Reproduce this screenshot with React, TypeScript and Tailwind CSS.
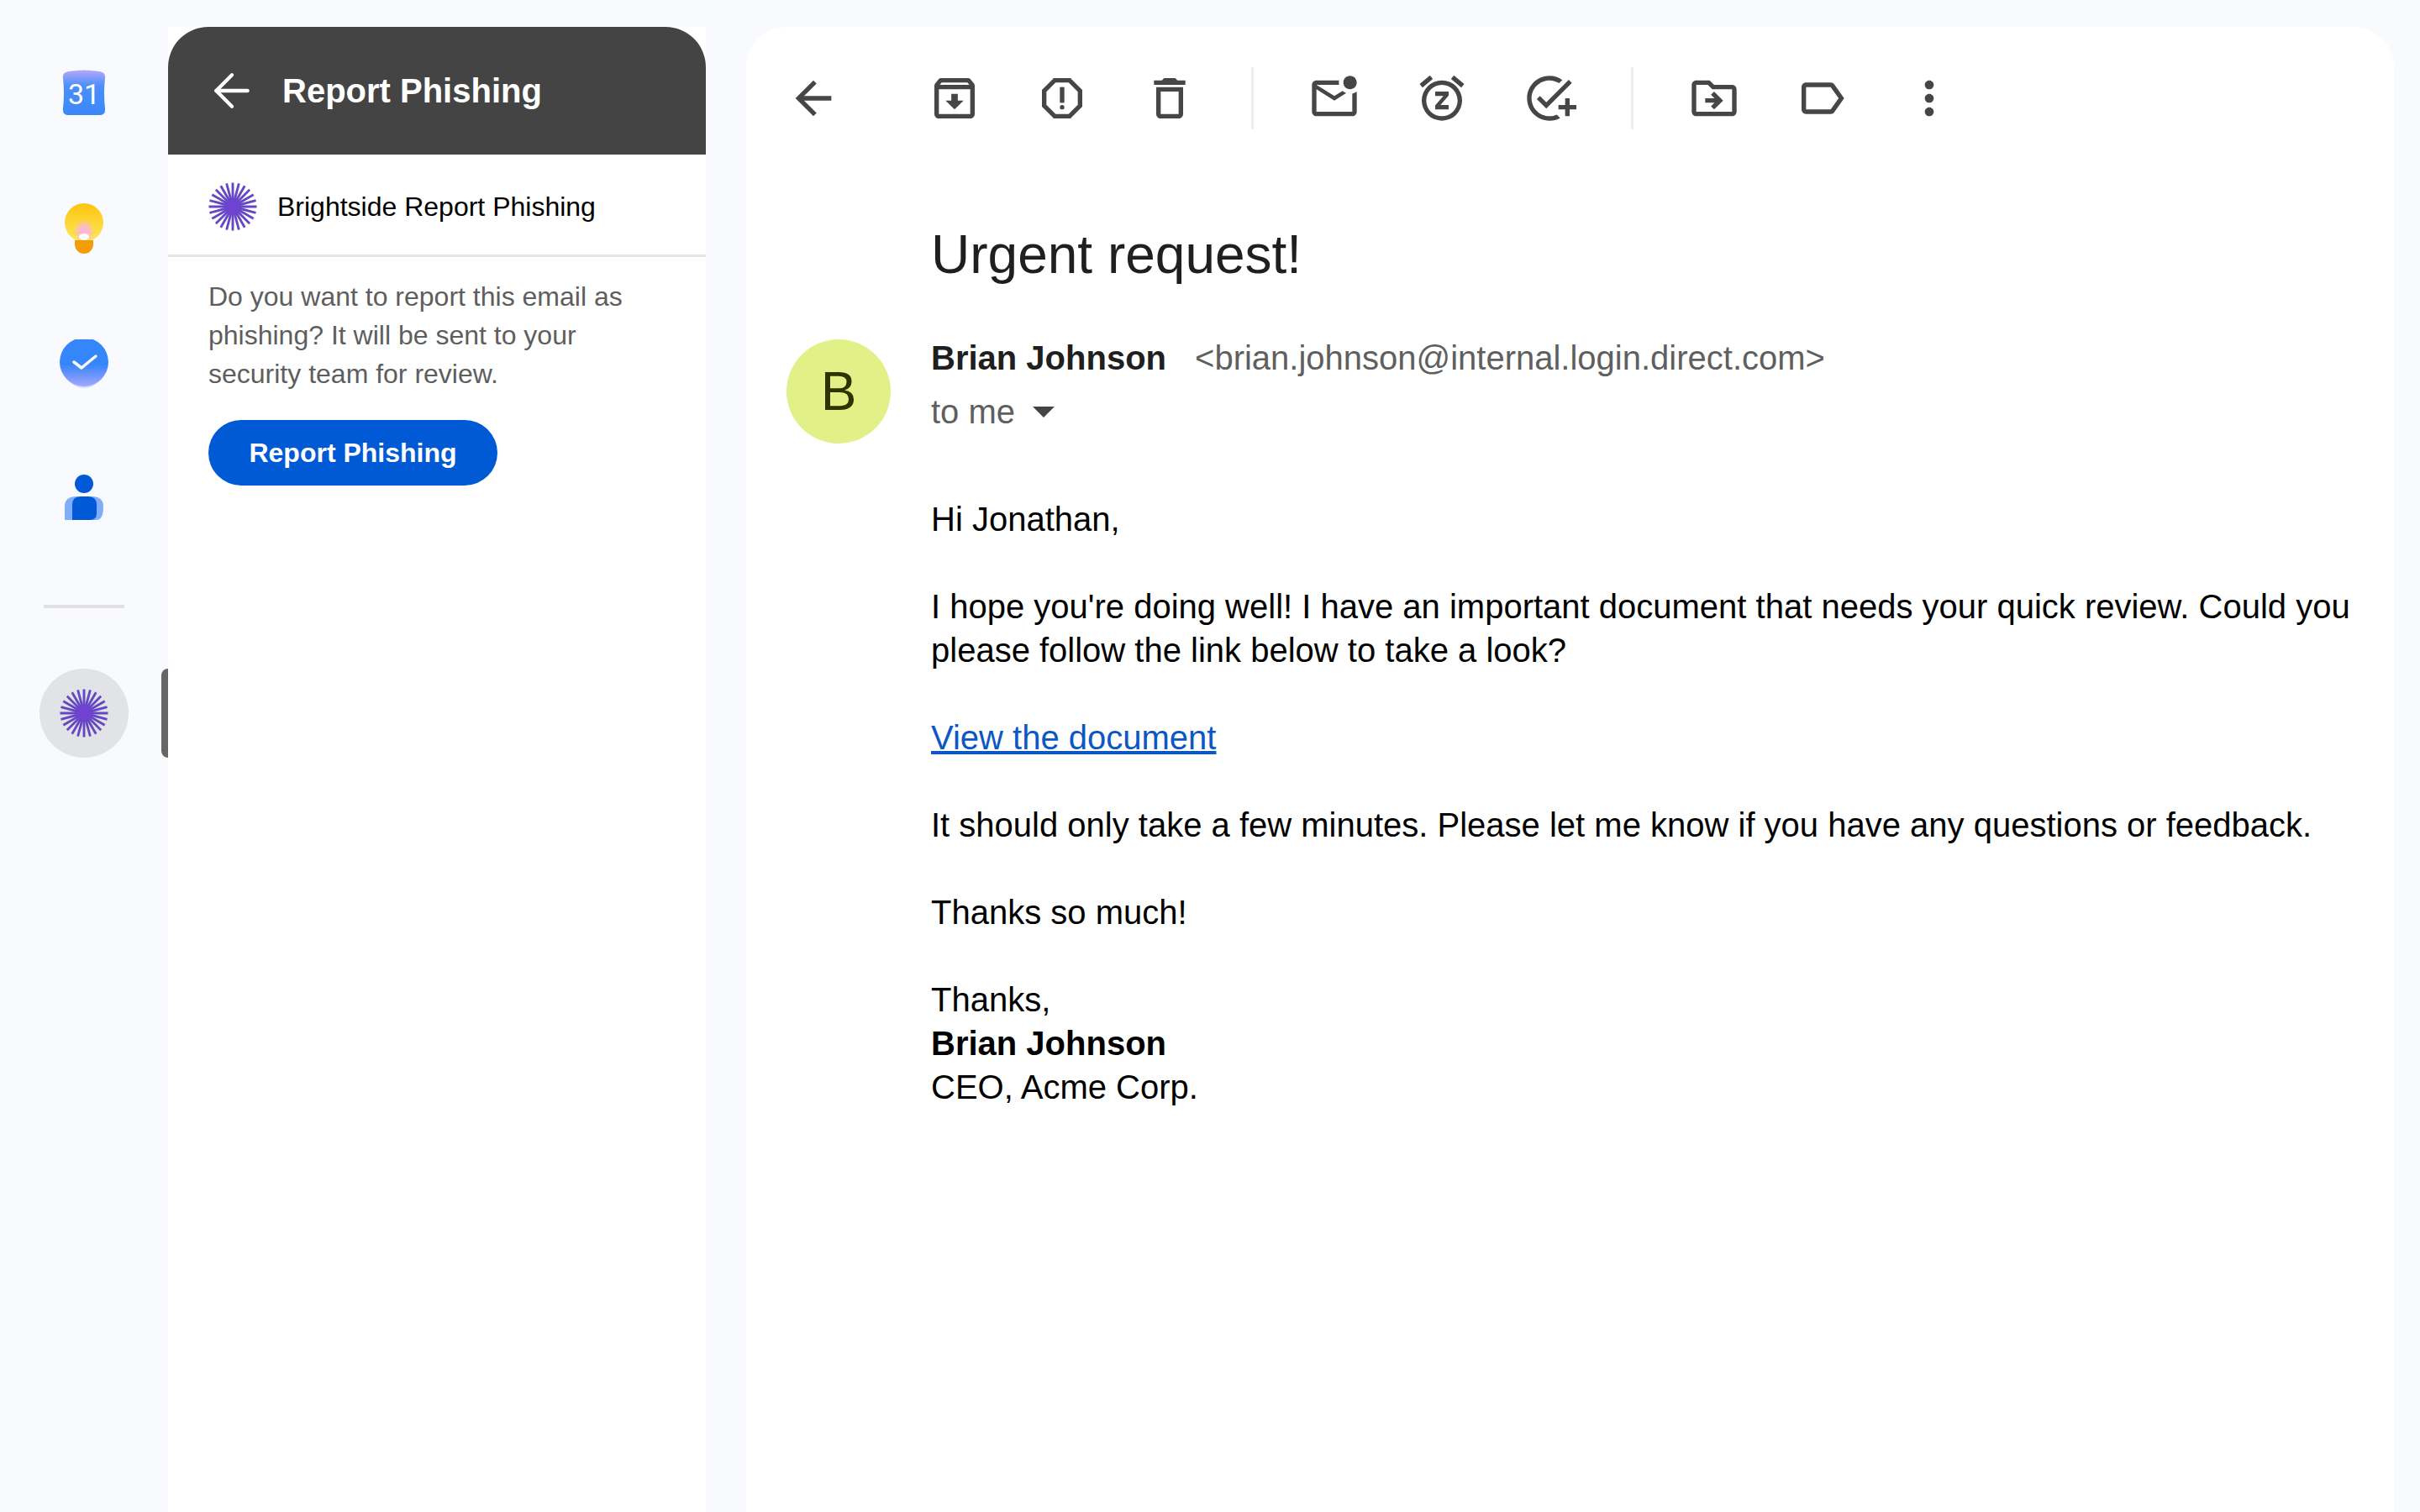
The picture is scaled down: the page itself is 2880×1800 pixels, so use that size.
import { ArrowLeft } from "lucide-react";
import {
  MdArrowBack,
  MdOutlineArchive,
  MdOutlineReport,
  MdOutlineDelete,
  MdOutlineMarkEmailUnread,
  MdOutlineSnooze,
  MdOutlineAddTask,
  MdOutlineDriveFileMove,
  MdOutlineLabel,
  MdMoreVert,
} from "react-icons/md";

function Burst({ size }: { size: number }) {
  const rays = Array.from({ length: 24 }, (_, i) => (i * 360) / 24);
  return (
    <svg width={size} height={size} viewBox="0 0 58 58">
      {rays.map((r) => (
        <polygon key={r} points="27.6,0.5 30.4,0.5 30.5,29 27.5,29" fill="#6547c4" transform={`rotate(${r} 29 29)`} />
      ))}
      <circle cx="29" cy="29" r="10" fill="#6f42cf" />
    </svg>
  );
}

function CalendarIcon() {
  return (
    <svg width="52" height="54" viewBox="0 0 52 54">
      <defs>
        <linearGradient id="cal" x1="0" y1="0" x2="0" y2="1">
          <stop offset="0" stopColor="#b5a8fb" />
          <stop offset="0.35" stopColor="#4b8ffa" />
          <stop offset="1" stopColor="#3b87f9" />
        </linearGradient>
      </defs>
      <path d="M8 2 Q26 -1 44 2 Q52 3 51 10 Q49 28 51 46 Q52 54 44 54 L8 54 Q0 54 1 46 Q3 28 1 10 Q0 3 8 2Z" fill="url(#cal)" />
      <text x="26" y="41" textAnchor="middle" fontSize="34" fill="#ffffff" fontFamily="Roboto, sans-serif">31</text>
    </svg>
  );
}

function BulbIcon() {
  return (
    <svg width="46" height="60" viewBox="0 0 46 60">
      <defs>
        <linearGradient id="bulb" x1="0" y1="0" x2="0" y2="1">
          <stop offset="0" stopColor="#fdc40f" />
          <stop offset="1" stopColor="#fde95a" />
        </linearGradient>
        <radialGradient id="glow" cx="0.5" cy="0.55" r="0.5">
          <stop offset="0.3" stopColor="#fbb6d8" />
          <stop offset="1" stopColor="#fbb6d8" stopOpacity="0" />
        </radialGradient>
      </defs>
      <circle cx="23" cy="23" r="23" fill="url(#bulb)" />
      <ellipse cx="23" cy="32" rx="13" ry="15" fill="url(#glow)" />
      <ellipse cx="23" cy="40" rx="6" ry="4" fill="#ffffff" />
      <path d="M12 44 H34 V49 A11 11 0 0 1 12 49 Z" fill="#f39c05" />
    </svg>
  );
}

function TasksIcon() {
  return (
    <svg width="58" height="58" viewBox="0 0 58 58">
      <defs>
        <linearGradient id="tsk" x1="0" y1="0" x2="0" y2="1">
          <stop offset="0.55" stopColor="#3585fb" />
          <stop offset="1" stopColor="#a7a6fd" />
        </linearGradient>
      </defs>
      <ellipse cx="29" cy="30" rx="26" ry="28" fill="#c6e3fb" />
      <circle cx="29" cy="27" r="29" fill="url(#tsk)" />
      <path d="M17 27 L26 34 L43 20" fill="none" stroke="#ffffff" strokeWidth="3.5" strokeLinecap="round" strokeLinejoin="round" />
    </svg>
  );
}

function ContactsIcon() {
  return (
    <svg width="46" height="54" viewBox="0 0 46 54">
      <circle cx="23" cy="11" r="11" fill="#0059d6" />
      <path d="M0 54 V38 Q0 26 14 26 H32 Q46 26 46 38 Q46 54 38 54 Z" fill="#80aefb" />
      <path d="M9 54 V36 Q9 26 19 26 H28 Q38 26 38 36 V46 Q38 54 30 54 Z" fill="#0059d6" />
    </svg>
  );
}

function ToolButton({ icon: Icon }: { icon: React.ComponentType<{ size?: number }> }) {
  return (
    <div className="flex h-16 w-16 items-center justify-center text-[#444746]">
      <Icon size={64} />
    </div>
  );
}

export default function App() {
  return (
    <div className="flex h-[1800px] w-[2880px] overflow-hidden bg-[#f8fafd] font-['Liberation_Sans',sans-serif] text-[#1f1f1f]">
      {/* icon rail */}
      <div className="relative flex w-[200px] shrink-0 flex-col items-center">
        <div className="mt-[83px]"><CalendarIcon /></div>
        <div className="mt-[105px]"><BulbIcon /></div>
        <div className="mt-[102px]"><TasksIcon /></div>
        <div className="mt-[103px]"><ContactsIcon /></div>
        <div className="mt-[101px] h-1 w-24 bg-[#e1e1e1]" />
        <div className="mt-[72px] flex h-[106px] w-[106px] items-center justify-center rounded-full bg-[#e1e3e6]">
          <Burst size={58} />
        </div>
        <div className="absolute left-[192px] top-[796px] h-[106px] w-2 rounded-l-lg bg-[#666666]" />
      </div>

      {/* add-on side panel */}
      <div className="mt-8 flex w-[640px] shrink-0 flex-col bg-white">
        <div className="flex h-[152px] items-center gap-[28px] rounded-t-[48px] bg-[#444444] pl-[44px] text-[40px] font-bold text-white">
          <ArrowLeft size={64} strokeWidth={1.6} />
          <span>Report Phishing</span>
        </div>
        <div className="flex h-[122px] items-center gap-6 border-b-[3px] border-[#e5e5e5] px-12 pt-1 text-[32px] text-black">
          <Burst size={58} />
          <span>Brightside Report Phishing</span>
        </div>
        <div className="px-12 pt-6">
          <p className="text-[32px] leading-[46px] text-[#5e5e5e]">
            Do you want to report this email as
            <br />
            phishing? It will be sent to your
            <br />
            security team for review.
          </p>
          <button className="mt-8 flex h-[78px] w-[344px] items-center justify-center rounded-full bg-[#005ad6] text-[32px] font-bold text-white">
            Report Phishing
          </button>
        </div>
      </div>

      {/* message */}
      <div className="ml-[48px] mr-[31px] mt-8 min-w-0 flex-1 rounded-t-[48px] bg-white pl-12">
        <div className="mt-12 flex items-center">
          <ToolButton icon={MdArrowBack} />
          <div className="ml-[104px] flex items-center gap-16">
            <ToolButton icon={MdOutlineArchive} />
            <ToolButton icon={MdOutlineReport} />
            <ToolButton icon={MdOutlineDelete} />
            <div className="ml-px h-[74px] w-[3px] bg-[#eeeeee]" />
            <ToolButton icon={MdOutlineMarkEmailUnread} />
            <ToolButton icon={MdOutlineSnooze} />
            <ToolButton icon={MdOutlineAddTask} />
            <div className="ml-px h-[74px] w-[3px] bg-[#eeeeee]" />
            <ToolButton icon={MdOutlineDriveFileMove} />
            <ToolButton icon={MdOutlineLabel} />
            <ToolButton icon={MdMoreVert} />
          </div>
        </div>

        <h1 className="ml-[172px] mt-[113px] text-[64px] leading-[72px]">Urgent request!</h1>

        <div className="mt-[65px] flex items-start gap-12">
          <div className="flex h-[124px] w-[124px] shrink-0 items-center justify-center rounded-full bg-[#e2f088] text-[64px] text-[#2f3300]">
            B
          </div>
          <div className="-mt-1">
            <div className="flex gap-[34px] text-[40px] leading-[52px]">
              <span className="font-bold">Brian Johnson</span>
              <span className="text-[#5f5f5f]">&lt;brian.johnson@internal.login.direct.com&gt;</span>
            </div>
            <div className="mt-3 flex items-center gap-[21px] text-[40px] leading-[52px] text-[#5f5f5f]">
              <span>to me</span>
              <span className="h-0 w-0 border-x-[13px] border-t-[13px] border-x-transparent border-t-[#444444]" />
            </div>
            <div className="mt-[76px] whitespace-nowrap text-[40px] leading-[52px] text-black">
              <p>Hi Jonathan,</p>
              <p className="mt-[52px]">
                I hope you're doing well! I have an important document that needs your quick review. Could you
                <br />
                please follow the link below to take a look?
              </p>
              <p className="mt-[52px]">
                <a className="text-[#0b57c4] underline">View the document</a>
              </p>
              <p className="mt-[52px]">It should only take a few minutes. Please let me know if you have any questions or feedback.</p>
              <p className="mt-[52px]">Thanks so much!</p>
              <p className="mt-[52px]">
                Thanks,
                <br />
                <b>Brian Johnson</b>
                <br />
                CEO, Acme Corp.
              </p>
            </div>
          </div>
        </div>
      </div>
    </div>
  );
}
